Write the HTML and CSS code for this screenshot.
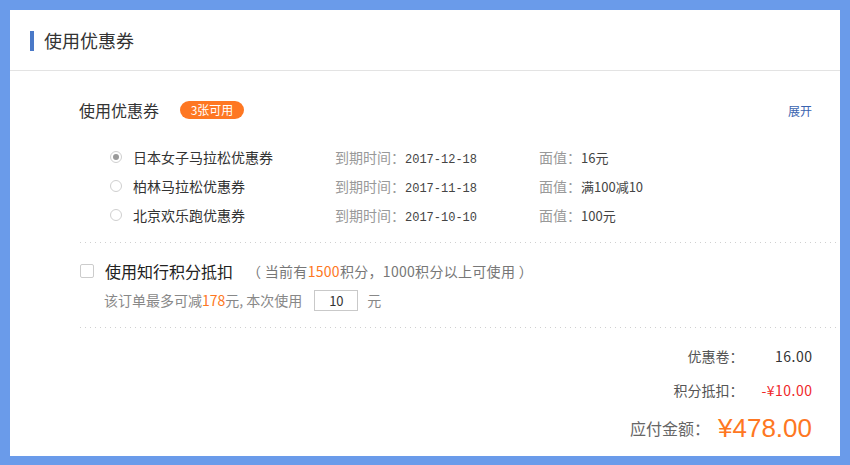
FILE: index.html
```html
<!DOCTYPE html>
<html lang="zh">
<head>
<meta charset="utf-8">
<link rel="stylesheet" href="styles.css">
</head>
<body>
<div class="panel">
  <div class="header"><span class="bar"></span><span class="header-title">使用优惠券</span></div>
  <div class="content">
    <div class="title-row">
      <span class="sec-title">使用优惠券</span>
      <span class="badge">3张可用</span>
      <span class="expand">展开</span>
    </div>
    <div class="coupons">
      <div class="coupon">
        <span class="radio checked"></span>
        <span class="c-name">日本女子马拉松优惠券</span>
        <span class="c-exp"><span class="lbl">到期时间：</span><span class="mono">2017-12-18</span></span>
        <span class="c-val"><span class="lbl">面值：</span><span class="num">16元</span></span>
      </div>
      <div class="coupon">
        <span class="radio"></span>
        <span class="c-name">柏林马拉松优惠券</span>
        <span class="c-exp"><span class="lbl">到期时间：</span><span class="mono">2017-11-18</span></span>
        <span class="c-val"><span class="lbl">面值：</span><span class="num">满100减10</span></span>
      </div>
      <div class="coupon">
        <span class="radio"></span>
        <span class="c-name">北京欢乐跑优惠券</span>
        <span class="c-exp"><span class="lbl">到期时间：</span><span class="mono">2017-10-10</span></span>
        <span class="c-val"><span class="lbl">面值：</span><span class="num">100元</span></span>
      </div>
    </div>
    <div class="dots"></div>
    <div class="points">
      <div class="p-row1">
        <span class="checkbox"></span>
        <span class="p-title">使用知行积分抵扣</span>
        <span class="p-note">（ 当前有<span class="orange">1500</span>积分，1000积分以上可使用 ）</span>
      </div>
      <div class="p-row2">
        <span>该订单最多可减<span class="orange">178</span>元, 本次使用</span>
        <span class="input">10</span>
        <span>元</span>
      </div>
    </div>
    <div class="dots"></div>
    <div class="summary">
      <div class="s-row"><span class="s-lbl">优惠卷：</span><span class="s-val">16.00</span></div>
      <div class="s-row"><span class="s-lbl">积分抵扣：</span><span class="s-val red">-¥10.00</span></div>
      <div class="s-row total"><span class="s-lbl">应付金额：</span><span class="s-val big">¥478.00</span></div>
    </div>
  </div>
</div>
</body>
</html>
```

FILE: styles.css
```css
html, body {
  margin: 0;
  padding: 0;
}
body {
  background: #6a9bea;
  padding: 10px;
  width: 830px;
  height: 445px;
  font-family: "Noto Sans CJK SC", "Liberation Sans", sans-serif;
  color: #333;
}
.panel {
  background: #fff;
  height: 446px;
}
.header {
  height: 60px;
  border-bottom: 1px solid #e3e3e3;
  display: flex;
  align-items: center;
  padding-left: 20px;
}
.bar {
  width: 4px;
  height: 20px;
  background: #4a79c8;
  margin-top: 1px;
}
.header-title {
  margin-left: 10px;
  font-size: 18px;
  color: #333;
  line-height: 20px;
}
.content {
  padding: 24px 2px 0 70px;
}
.title-row {
  height: 30px;
  display: flex;
  align-items: center;
}
.sec-title {
  font-size: 16px;
  color: #333;
  margin-left: -1px;
}
.badge {
  margin-left: 21px;
  background: #fe7722;
  color: #fff;
  font-size: 12px;
  height: 18px;
  line-height: 18px;
  border-radius: 9px;
  padding: 0 9px;
  width: 46px;
  text-align: center;
}
.expand {
  margin-left: auto;
  margin-right: 26px;
  font-size: 12px;
  color: #3b64b0;
}
.coupons {
  margin-top: 17px;
  padding-left: 30px;
}
.coupon {
  height: 29px;
  display: grid;
  grid-template-columns: 23px 202px 204px 1fr;
  align-items: center;
  font-size: 14px;
}
.radio {
  width: 10px;
  height: 10px;
  border: 1px solid #cfcfcf;
  border-radius: 50%;
  position: relative;
  background: #fff;
}
.radio.checked::after {
  content: "";
  position: absolute;
  left: 2px;
  top: 2px;
  width: 6px;
  height: 6px;
  border-radius: 50%;
  background: #9a9a9a;
}
.c-name {
  color: #333;
}
.lbl {
  color: #999;
}
.mono {
  font-family: "Liberation Mono", monospace;
  font-size: 12px;
  color: #444;
}
.num {
  color: #444;
  font-size: 13px;
}
.dots {
  height: 1px;
  margin-top: 13px;
  background-image: repeating-linear-gradient(to right, #d0d0d0 0, #d0d0d0 1px, transparent 1px, transparent 5px);
}
.points {
  padding-top: 14px;
}
.p-row1 {
  height: 28px;
  display: flex;
  align-items: center;
}
.checkbox {
  width: 12px;
  height: 12px;
  border: 1px solid #cccccc;
  border-radius: 2px;
  margin-right: 11px;
}
.p-title {
  font-size: 16px;
  color: #222;
}
.p-note {
  margin-left: 14px;
  font-size: 14px;
  color: #777;
  letter-spacing: 0.3px;
}
.orange {
  color: #fe7722;
}
.p-row2 {
  height: 30px;
  display: flex;
  align-items: center;
  padding-left: 24px;
  font-size: 14px;
  color: #888;
}
.input {
  margin-left: 12px;
  width: 42px;
  height: 19px;
  border: 1px solid #c9c9c9;
  text-align: center;
  line-height: 19px;
  color: #333;
  font-size: 13px;
  margin-right: 9px;
}
.points + .dots {
  margin-top: 12px;
}
.summary {
  padding-right: 26px;
  padding-top: 11px;
}
.s-row {
  height: 34px;
  display: flex;
  justify-content: flex-end;
  align-items: center;
  font-size: 14px;
}
.s-lbl {
  color: #555;
}
.s-val {
  min-width: 69px;
  text-align: right;
  color: #333;
  letter-spacing: 0.5px;
  margin-right: -0.5px;
}
.red {
  color: #f0282a;
}
.total {
  height: 40px;
  margin-top: 1px;
}
.total .s-lbl {
  font-size: 16px;
  color: #666;
  margin-right: 8px;
}
.big {
  font-family: "Liberation Sans", sans-serif;
  font-size: 26px;
  color: #fe7722;
  min-width: 0;
  letter-spacing: 0;
  margin-right: 0;
}
```
